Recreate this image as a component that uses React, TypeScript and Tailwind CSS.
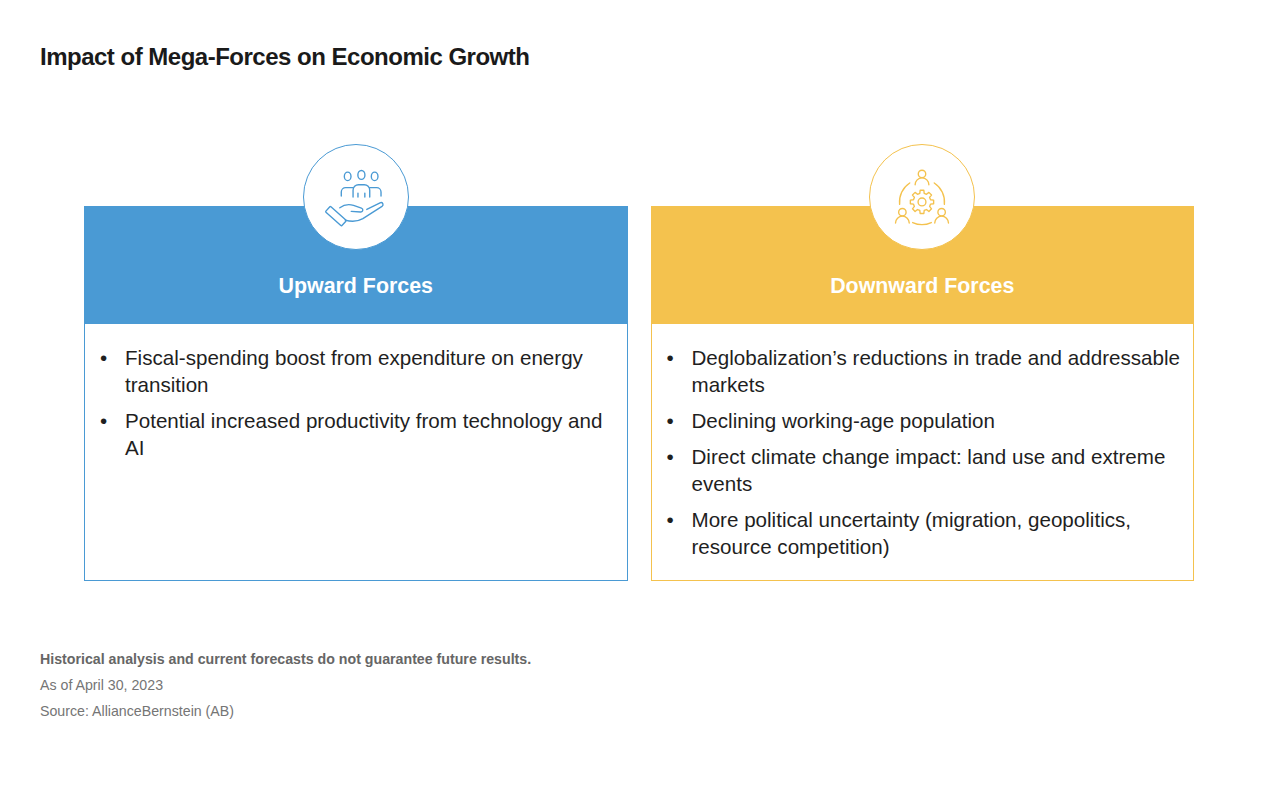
const upward = [
  "Fiscal-spending boost from expenditure on energy transition",
  "Potential increased productivity from technology and AI",
];

const downward = [
  "Deglobalization’s reductions in trade and addressable markets",
  "Declining working-age population",
  "Direct climate change impact: land use and extreme events",
  "More political uncertainty (migration, geopolitics, resource competition)",
];

function gearPath(cx: number, cy: number, rOut: number, rIn: number, teeth: number) {
  const pts: string[] = [];
  const step = (Math.PI * 2) / teeth;
  for (let i = 0; i < teeth; i++) {
    const a = i * step - Math.PI / 2;
    const angles = [
      [a - step * 0.32, rIn],
      [a - step * 0.2, rOut],
      [a + step * 0.2, rOut],
      [a + step * 0.32, rIn],
    ];
    angles.forEach(([ang, r]) => {
      pts.push(`${(cx + Math.cos(ang) * r).toFixed(2)} ${(cy + Math.sin(ang) * r).toFixed(2)}`);
    });
  }
  return "M" + pts.join(" L") + " Z";
}

function HandPeopleIcon() {
  return (
    <svg viewBox="0 0 106 106" className="w-full h-full" fill="none" stroke="#4a9ad4" strokeWidth="1.4" strokeLinecap="round" strokeLinejoin="round">
      <ellipse cx="44.5" cy="32" rx="3.4" ry="4.3" />
      <ellipse cx="58.5" cy="30.5" rx="3.6" ry="4.5" />
      <ellipse cx="72" cy="32" rx="3.4" ry="4.3" />
      <path d="M50 53 V46 a5.5 5.5 0 0 1 5.5 -5.5 h6 a5.5 5.5 0 0 1 5.5 5.5 V53" />
      <path d="M50 43.5 h-7.5 a4.5 4.5 0 0 0 -4.5 4.5 V52" />
      <path d="M67 43.5 h7 a4.5 4.5 0 0 1 4.5 4.5 V52" />
      <path d="M55 53 V49 M62 53 V49" />
      <path d="M36.5 64 c4.5 -3.5 9 -4 14 -2.5 l8 2.8 c2.4 0.9 1.6 4.2 -0.8 4 l-9.5 -0.6" />
      <path d="M42 76.5 c6 1.8 12.5 1.6 18 -1.5 l19.5 -12.5 c2.2 -1.6 0.6 -4.6 -2 -3.6 l-13.5 6.8" />
      <rect x="-11" y="-3.8" width="22" height="7.6" rx="0.8" transform="translate(32.5 72.5) rotate(42)" />
    </svg>
  );
}

function GearPeopleIcon() {
  const c = { x: 53, y: 58 };
  const r = 23;
  const pt = (dx: number, dy: number) => `${c.x + dx} ${c.y + dy}`;
  return (
    <svg viewBox="0 0 106 106" className="w-full h-full" fill="none" stroke="#f4c24e" strokeWidth="1.4" strokeLinecap="round" strokeLinejoin="round">
      <path d={gearPath(c.x, c.y, 12, 9, 8)} />
      <circle cx={c.x} cy={c.y} r="4" />
      <circle cx="53" cy="29.5" r="3.8" />
      <path d="M46 40.5 a7 7 0 0 1 14 0" />
      <circle cx="33" cy="68.5" r="3.8" />
      <path d="M26 79.5 a7 7 0 0 1 14 0" />
      <circle cx="73" cy="68.5" r="3.8" />
      <path d="M66 79.5 a7 7 0 0 1 14 0" />
      <path d={`M${pt(-12.5, -19.3)} A${r} ${r} 0 0 0 ${pt(-22.8, 2.5)}`} />
      <path d={`M${pt(12.5, -19.3)} A${r} ${r} 0 0 1 ${pt(22.8, 2.5)}`} />
      <path d={`M${pt(-9.5, 21)} A${r} ${r} 0 0 0 ${pt(9.5, 21)}`} />
    </svg>
  );
}

type ForceCardProps = {
  title: string;
  items: string[];
  tone: "blue" | "yellow";
};

function ForceCard({ title, items, tone }: ForceCardProps) {
  const blue = tone === "blue";
  return (
    <div className={`relative flex flex-col border ${blue ? "border-[#4a9ad4]" : "border-[#f4c24e]"}`}>
      <div
        className={`absolute left-1/2 top-[-63px] -translate-x-1/2 w-[106px] h-[106px] rounded-full bg-white border z-10 ${
          blue ? "border-[#4a9ad4]" : "border-[#f4c24e]"
        }`}
      >
        {blue ? <HandPeopleIcon /> : <GearPeopleIcon />}
      </div>
      <div className={`${blue ? "bg-[#4a9ad4]" : "bg-[#f4c24e]"} h-[117px] flex items-end justify-center pb-[24px]`}>
        <h2 className="text-white text-[21.4px] leading-[28px] font-bold">{title}</h2>
      </div>
      <ul className="flex-1 bg-white pt-[20px] pb-[20px] pl-[15px] pr-[10px] flex flex-col gap-[9px]">
        {items.map((item) => (
          <li key={item} className="flex text-[20.6px] leading-[27px] text-[#1f1f1f]">
            <span className="w-[25px] shrink-0">•</span>
            <span>{item}</span>
          </li>
        ))}
      </ul>
    </div>
  );
}

export default function App() {
  return (
    <div className="w-[1280px] h-[787px] bg-white" style={{ fontFamily: '"Liberation Sans", Arial, sans-serif' }}>
      <div className="px-[40px] pt-[42px]">
        <h1 className="text-[24px] leading-[30px] font-bold text-[#1a1a1a] tracking-[-0.5px]">
          Impact of Mega-Forces on Economic Growth
        </h1>
      </div>
      <div className="grid grid-cols-2 gap-[23px] pl-[84px] pr-[86px] mt-[134px]">
        <ForceCard title="Upward Forces" items={upward} tone="blue" />
        <ForceCard title="Downward Forces" items={downward} tone="yellow" />
      </div>
      <div className="px-[40px] mt-[65px] text-[14.2px] leading-[26px] text-[#757575]">
        <p className="font-bold text-[#666666]">Historical analysis and current forecasts do not guarantee future results.</p>
        <p>As of April 30, 2023</p>
        <p>Source: AllianceBernstein (AB)</p>
      </div>
    </div>
  );
}
